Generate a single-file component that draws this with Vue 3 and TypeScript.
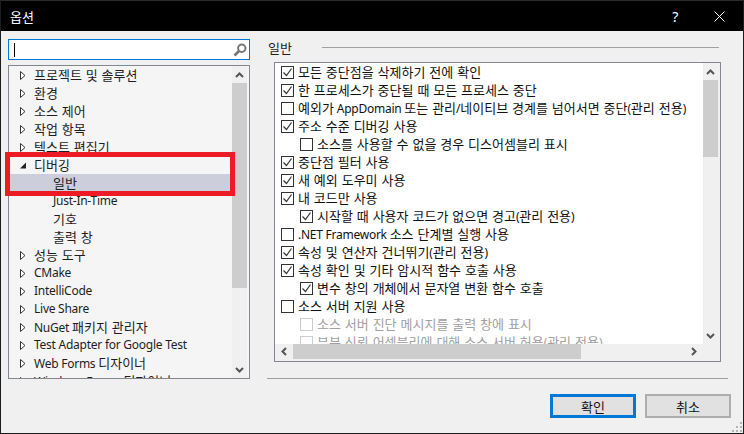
<script setup lang="ts">
interface TreeItem { label: string; depth: number; state?: 'open' | 'closed'; selected?: boolean }
interface OptionRow { label: string; checked: boolean; indent?: boolean; disabled?: boolean }

const treeItems: TreeItem[] = [
  { label: '프로젝트 및 솔루션', depth: 0, state: 'closed' },
  { label: '환경', depth: 0, state: 'closed' },
  { label: '소스 제어', depth: 0, state: 'closed' },
  { label: '작업 항목', depth: 0, state: 'closed' },
  { label: '텍스트 편집기', depth: 0, state: 'closed' },
  { label: '디버깅', depth: 0, state: 'open' },
  { label: '일반', depth: 1, selected: true },
  { label: 'Just-In-Time', depth: 1 },
  { label: '기호', depth: 1 },
  { label: '출력 창', depth: 1 },
  { label: '성능 도구', depth: 0, state: 'closed' },
  { label: 'CMake', depth: 0, state: 'closed' },
  { label: 'IntelliCode', depth: 0, state: 'closed' },
  { label: 'Live Share', depth: 0, state: 'closed' },
  { label: 'NuGet 패키지 관리자', depth: 0, state: 'closed' },
  { label: 'Test Adapter for Google Test', depth: 0, state: 'closed' },
  { label: 'Web Forms 디자이너', depth: 0, state: 'closed' },
  { label: 'Windows Forms 디자이너', depth: 0, state: 'closed' },
]

const options: OptionRow[] = [
  { label: '모든 중단점을 삭제하기 전에 확인', checked: true },
  { label: '한 프로세스가 중단될 때 모든 프로세스 중단', checked: true },
  { label: '예외가 AppDomain 또는 관리/네이티브 경계를 넘어서면 중단(관리 전용)', checked: false },
  { label: '주소 수준 디버깅 사용', checked: true },
  { label: '소스를 사용할 수 없을 경우 디스어셈블리 표시', checked: false, indent: true },
  { label: '중단점 필터 사용', checked: true },
  { label: '새 예외 도우미 사용', checked: true },
  { label: '내 코드만 사용', checked: true },
  { label: '시작할 때 사용자 코드가 없으면 경고(관리 전용)', checked: true, indent: true },
  { label: '.NET Framework 소스 단계별 실행 사용', checked: false },
  { label: '속성 및 연산자 건너뛰기(관리 전용)', checked: true },
  { label: '속성 확인 및 기타 암시적 함수 호출 사용', checked: true },
  { label: '변수 창의 개체에서 문자열 변환 함수 호출', checked: true, indent: true },
  { label: '소스 서버 지원 사용', checked: false },
  { label: '소스 서버 진단 메시지를 출력 창에 표시', checked: false, indent: true, disabled: true },
  { label: '부분 신뢰 어셈블리에 대해 소스 서버 허용(관리 전용)', checked: false, indent: true, disabled: true },
]

// hangul runs are set larger than latin ones, the two fonts differ in width
function runs(text: string) {
  return text
    .split(/([\uAC00-\uD7A3]+(?: +[\uAC00-\uD7A3]+)*)/)
    .filter(Boolean)
    .map((part) => ({ part, ko: /[\uAC00-\uD7A3]/.test(part) }))
}
</script>

<template>
  <div class="dialog">
    <header class="titlebar">
      <span class="title ko">옵션</span>
      <span class="help">?</span>
      <svg class="close" width="11" height="11" viewBox="0 0 11 11">
        <path d="M.5.5l10 10M10.5.5l-10 10" stroke="#fff" fill="none" />
      </svg>
    </header>

    <div class="body">
      <div class="left">
        <div class="search">
          <span class="caret"></span>
          <svg class="glass" width="14" height="14" viewBox="0 0 14 14">
            <circle cx="8.8" cy="5.2" r="3.7" fill="none" stroke="#777" stroke-width="2" />
            <path d="M6 8L1.5 12.5" stroke="#777" stroke-width="2.6" />
          </svg>
        </div>
        <div class="tree">
          <div class="tree-list">
            <div
              v-for="item in treeItems"
              :key="item.label"
              class="tree-row"
              :class="{ selected: item.selected, child: item.depth === 1 }"
            >
              <svg v-if="item.state === 'closed'" class="arrow" width="6" height="9" viewBox="0 0 6 9">
                <path d="M.5.5v8L5 4.5z" fill="#fff" stroke="#333" />
              </svg>
              <svg v-else-if="item.state === 'open'" class="arrow" width="6" height="9" viewBox="0 0 6 9">
                <path d="M0 7.5h6V1.5z" fill="#222" />
              </svg>
              <span class="label"><span v-for="r in runs(item.label)" :key="r.part" :class="{ ko: r.ko }">{{ r.part }}</span></span>
            </div>
          </div>
          <div class="vbar tree-bar">
            <div class="bar-btn">
              <svg width="9" height="6" viewBox="0 0 9 6"><path d="M1 5l3.5-3.5L8 5" fill="none" stroke="#555" stroke-width="2" /></svg>
            </div>
            <div class="track"><div class="thumb tree-thumb"></div></div>
            <div class="bar-btn">
              <svg width="9" height="6" viewBox="0 0 9 6"><path d="M1 1l3.5 3.5L8 1" fill="none" stroke="#555" stroke-width="2" /></svg>
            </div>
          </div>
        </div>
      </div>

      <div class="right">
        <div class="heading">
          <span class="ko">일반</span>
          <i class="rule"></i>
        </div>
        <div class="options">
          <div class="options-top">
            <div class="option-list">
              <div
                v-for="row in options"
                :key="row.label"
                class="option"
                :class="{ indent: row.indent, disabled: row.disabled }"
              >
                <span class="box">
                  <svg v-if="row.checked" width="11" height="11" viewBox="0 0 11 11">
                    <path d="M1.5 5.5l3 3 5-7" fill="none" stroke="#333" stroke-width="1.2" />
                  </svg>
                </span>
                <span class="label"><span v-for="r in runs(row.label)" :key="r.part" :class="{ ko: r.ko }">{{ r.part }}</span></span>
              </div>
            </div>
            <div class="vbar option-bar">
              <div class="bar-btn">
                <svg width="9" height="6" viewBox="0 0 9 6"><path d="M1 5l3.5-3.5L8 5" fill="none" stroke="#555" stroke-width="2" /></svg>
              </div>
              <div class="track"><div class="thumb option-thumb"></div></div>
              <div class="bar-btn">
                <svg width="9" height="6" viewBox="0 0 9 6"><path d="M1 1l3.5 3.5L8 1" fill="none" stroke="#555" stroke-width="2" /></svg>
              </div>
            </div>
          </div>
          <div class="hbar">
            <div class="hbar-btn">
              <svg width="6" height="9" viewBox="0 0 6 9"><path d="M5 1L1.5 4.5 5 8" fill="none" stroke="#555" stroke-width="2" /></svg>
            </div>
            <div class="hthumb"></div>
            <div class="hbar-end">
              <svg width="6" height="9" viewBox="0 0 6 9"><path d="M1 1l3.5 3.5L1 8" fill="none" stroke="#555" stroke-width="2" /></svg>
            </div>
          </div>
        </div>
        <div class="separator"></div>
      </div>
    </div>

    <footer class="footer">
      <button class="btn primary ko">확인</button>
      <button class="btn ko">취소</button>
      <svg class="grip" width="11" height="11" viewBox="0 0 11 11" fill="#b4b4b4">
        <rect x="8" y="0" width="2" height="2" />
        <rect x="4" y="4" width="2" height="2" /><rect x="8" y="4" width="2" height="2" />
        <rect x="0" y="8" width="2" height="2" /><rect x="4" y="8" width="2" height="2" /><rect x="8" y="8" width="2" height="2" />
      </svg>
    </footer>

    <div class="callout"></div>
  </div>
</template>

<style>
html, body { margin: 0; background: #f0f0f0; }
</style>

<style scoped>
.dialog {
  position: relative;
  box-sizing: border-box;
  width: 744px;
  height: 434px;
  display: flex;
  flex-direction: column;
  background: #f0f0f0;
  border: 1px solid #1c1c1c;
  border-top-color: #2a2a2a;
  overflow: hidden;
  font-family: "Noto Sans", "Noto Sans CJK KR", sans-serif;
  font-size: 12px;
  letter-spacing: -0.25px;
  color: #1e1e1e;
}
.ko {
  font-size: 13px;
  font-family: "Noto Sans CJK KR", sans-serif;
  letter-spacing: 0;
  word-spacing: 1px;
}

.titlebar {
  height: 30px;
  flex: none;
  display: flex;
  align-items: center;
  background: #000;
  color: #fff;
  padding: 0 18px 0 9px;
}
.title { flex: 1; }
.help { margin-right: 36px; font-size: 14px; }

.body { flex: none; display: flex; gap: 17px; padding: 0 15px 0 7px; }
.left { width: 242px; display: flex; flex-direction: column; padding-top: 8px; gap: 5px; }

.search {
  box-sizing: border-box;
  height: 21px;
  display: flex;
  align-items: center;
  justify-content: space-between;
  background: #fff;
  border: 1px solid #0078d7;
  padding: 0 2px 0 5px;
}
.caret { width: 1px; height: 14px; background: #000; }

.tree {
  box-sizing: border-box;
  height: 314px;
  display: flex;
  border: 1px solid #828790;
  background: #f5f5f5;
}
.tree-list { flex: 1; min-width: 0; overflow: hidden; }
.tree-row {
  height: 18px;
  display: flex;
  align-items: center;
  padding-left: 25px;
  position: relative;
  white-space: nowrap;
}
.tree-row.child { padding-left: 44px; }
.tree-row.selected { background: #cccedb; }
.label { line-height: 18px; }
.arrow { position: absolute; left: 11px; top: 5px; }

.vbar { width: 15px; flex: none; display: flex; flex-direction: column; background: #f0f0f0; }
.tree-bar { margin-right: 2px; }
.option-bar { margin-right: 2px; }
.bar-btn { height: 17px; flex: none; display: flex; align-items: center; justify-content: center; }
.track { flex: 1; }
.thumb { background: #cdcdcd; }
.tree-thumb { height: 205px; }
.option-thumb { height: 77px; }

.right { flex: 1; min-width: 0; }
.heading {
  height: 18px;
  margin-top: 7px;
  display: flex;
  align-items: center;
  padding-left: 1px;
  padding-right: 9px;
  gap: 30px;
}
.rule { flex: 1; height: 1px; background: #a0a0a0; }

.options {
  box-sizing: border-box;
  height: 300px;
  width: 447px;
  margin: 6px 0 0 7px;
  border: 1px solid #828790;
  background: #f0f0f0;
}
.options-top { display: flex; height: 281px; }
.option-list { flex: 1; min-width: 0; background: #fff; overflow: hidden; padding-left: 6px; }
.option {
  height: 18px;
  display: flex;
  align-items: center;
  gap: 4px;
  white-space: nowrap;
  color: #111;
}
.option.indent { padding-left: 19px; }
.option.disabled { color: #a0a0a0; }
.box {
  box-sizing: border-box;
  width: 13px;
  height: 13px;
  flex: none;
  display: flex;
  align-items: center;
  justify-content: center;
  background: #fff;
  border: 1px solid #333;
}
.option.disabled .box { border-color: #ccc; }

.hbar { display: flex; height: 15px; }
.hbar-btn { width: 18px; flex: none; display: flex; align-items: center; justify-content: center; }
.hthumb { width: 288px; background: #cdcdcd; }
.hbar-end { flex: 1; display: flex; align-items: center; justify-content: flex-end; padding-right: 23px; }

.separator { height: 1px; margin-top: 16px; background: #a0a0a0; }

.footer {
  position: relative;
  flex: 1;
  display: flex;
  justify-content: flex-end;
  align-items: flex-start;
  gap: 9px;
  padding: 15px 12px 0 0;
}
.btn {
  box-sizing: border-box;
  width: 86px;
  height: 24px;
  padding: 0;
  background: #e1e1e1;
  border: 2px solid #adadad;
  color: #111;
}
.btn.primary { border: 3px solid #0078d7; }
.grip { position: absolute; right: 0; bottom: 0; }

/* annotation drawn on top of the screenshot */
.callout {
  position: absolute;
  left: 4px;
  top: 151px;
  width: 230px;
  height: 44px;
  box-sizing: border-box;
  border: 5px solid #ed1c24;
}
</style>
